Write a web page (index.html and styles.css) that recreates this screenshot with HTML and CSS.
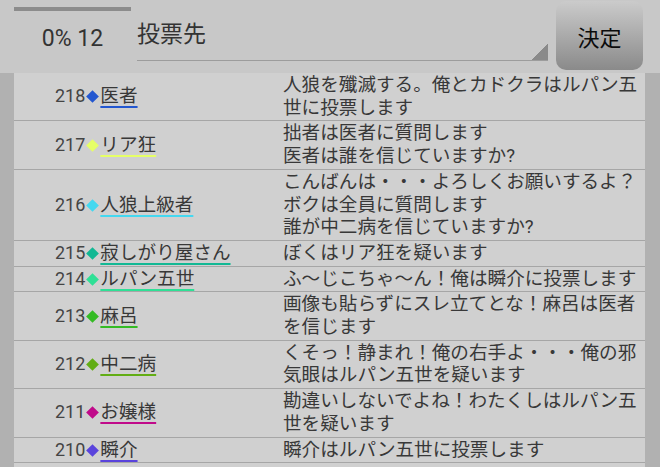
FILE: index.html
```html
<!DOCTYPE html>
<html lang="ja">
<head>
  <meta charset="UTF-8" />
  <meta name="viewport" content="width=device-width, initial-scale=1.0"/>
  <title>投票</title>
  <link rel="stylesheet" href="styles.css">
</head>
<body>
  <div class="top-bar">
    <div class="status">
      <div class="progress"><div class="progress-fill"></div></div>
      <div class="status-label">0% 12</div>
    </div>
    <div class="vote-select">投票先</div>
    <button class="decide-btn">決定</button>
  </div>

  <div class="log-wrap">
    <div class="log">
      <div class="log-row">
        <div class="speaker"><span class="num">218</span><span class="mark blue"></span><span class="name blue">医者</span></div>
        <div class="message">人狼を殲滅する。俺とカドクラはルパン五世に投票します</div>
      </div>
      <div class="log-row">
        <div class="speaker"><span class="num">217</span><span class="mark lime"></span><span class="name lime">リア狂</span></div>
        <div class="message">拙者は医者に質問します<br>医者は誰を信じていますか?</div>
      </div>
      <div class="log-row">
        <div class="speaker"><span class="num">216</span><span class="mark cyan"></span><span class="name cyan">人狼上級者</span></div>
        <div class="message">こんばんは・・・よろしくお願いするよ？<br>ボクは全員に質問します<br>誰が中二病を信じていますか?</div>
      </div>
      <div class="log-row">
        <div class="speaker"><span class="num">215</span><span class="mark teal"></span><span class="name teal">寂しがり屋さん</span></div>
        <div class="message">ぼくはリア狂を疑います</div>
      </div>
      <div class="log-row">
        <div class="speaker"><span class="num">214</span><span class="mark mint"></span><span class="name mint">ルパン五世</span></div>
        <div class="message">ふ～じこちゃ～ん！俺は瞬介に投票します</div>
      </div>
      <div class="log-row">
        <div class="speaker"><span class="num">213</span><span class="mark green"></span><span class="name green">麻呂</span></div>
        <div class="message">画像も貼らずにスレ立てとな！麻呂は医者を信じます</div>
      </div>
      <div class="log-row">
        <div class="speaker"><span class="num">212</span><span class="mark olive"></span><span class="name olive">中二病</span></div>
        <div class="message">くそっ！静まれ！俺の右手よ・・・俺の邪気眼はルパン五世を疑います</div>
      </div>
      <div class="log-row">
        <div class="speaker"><span class="num">211</span><span class="mark magenta"></span><span class="name magenta">お嬢様</span></div>
        <div class="message">勘違いしないでよね！わたくしはルパン五世を疑います</div>
      </div>
      <div class="log-row">
        <div class="speaker"><span class="num">210</span><span class="mark violet"></span><span class="name violet">瞬介</span></div>
        <div class="message">瞬介はルパン五世に投票します</div>
      </div>
    </div>
  </div>
</body>
</html>
```

FILE: styles.css
```css
html, body {
  margin: 0;
  height: 100%;
}
body {
  font-family: Roboto, "Noto Sans CJK JP", sans-serif;
  background-color: #c8c8c8;
  color: #383838;
  overflow: hidden;
  display: flex;
  flex-direction: column;
}
.top-bar {
  display: flex;
  height: 73px;
  padding: 0 17px 0 14px;
  flex-shrink: 0;
}
.status {
  width: 117px;
}
.progress {
  margin-top: 7px;
  height: 4px;
  background: #8c8c8c;
}
.status-label {
  margin-top: 14px;
  font-size: 23px;
  line-height: 27px;
  text-align: center;
  color: #333;
}
.vote-select {
  flex: 1;
  margin-left: 6px;
  height: 61px;
  box-sizing: border-box;
  padding-top: 4px;
  display: flex;
  align-items: center;
  font-size: 23px;
  color: #333;
  border-bottom: 1px solid #9c9c9c;
  background: linear-gradient(to top left, #8a8a8a 50%, transparent 50%) no-repeat right bottom / 16px 16px;
}
.decide-btn {
  margin: 1px 0 0 8px;
  width: 87px;
  height: 69px;
  border: none;
  border-radius: 10px;
  background: linear-gradient(#cbcbcb, #8a8a8a);
  font-family: "Noto Sans CJK JP", sans-serif;
  font-size: 22px;
  color: #0c0c0c;
  padding: 0;
}
.log-wrap {
  flex: 1;
  padding: 0 15px 0 14px;
  background: #b1b1b1;
}
.log {
  height: 100%;
  background: #d0d0d0;
}
.log-row {
  display: grid;
  grid-template-columns: 265px 1fr;
  border-bottom: 1px solid #a6a6a6;
  padding: 1px 0;
  line-height: 22.7px;
  font-size: 18.6px;
}
.speaker {
  align-self: center;
  padding-left: 41px;
  white-space: nowrap;
}
.num {
  font-size: 18px;
  color: #444;
}
.mark {
  display: inline-block;
  width: 9px;
  height: 9px;
  margin: 0 3px 1px 3px;
  transform: rotate(45deg);
}
.name {
  text-decoration: underline 2px;
  text-underline-offset: 4px;
}
.message {
  padding-left: 4px;
}
.mark.blue { background: #2357d0; }
.name.blue { text-decoration-color: #2357d0; }
.mark.lime { background: #e6ff66; }
.name.lime { text-decoration-color: #e6ff66; }
.mark.cyan { background: #44d8f0; }
.name.cyan { text-decoration-color: #44d8f0; }
.mark.teal { background: #12b894; }
.name.teal { text-decoration-color: #12b894; }
.mark.mint { background: #2fe096; }
.name.mint { text-decoration-color: #2fe096; }
.mark.green { background: #34bb24; }
.name.green { text-decoration-color: #34bb24; }
.mark.olive { background: #62ad14; }
.name.olive { text-decoration-color: #62ad14; }
.mark.magenta { background: #c00a8a; }
.name.magenta { text-decoration-color: #c00a8a; }
.mark.violet { background: #5a44dc; }
.name.violet { text-decoration-color: #5a44dc; }
```
